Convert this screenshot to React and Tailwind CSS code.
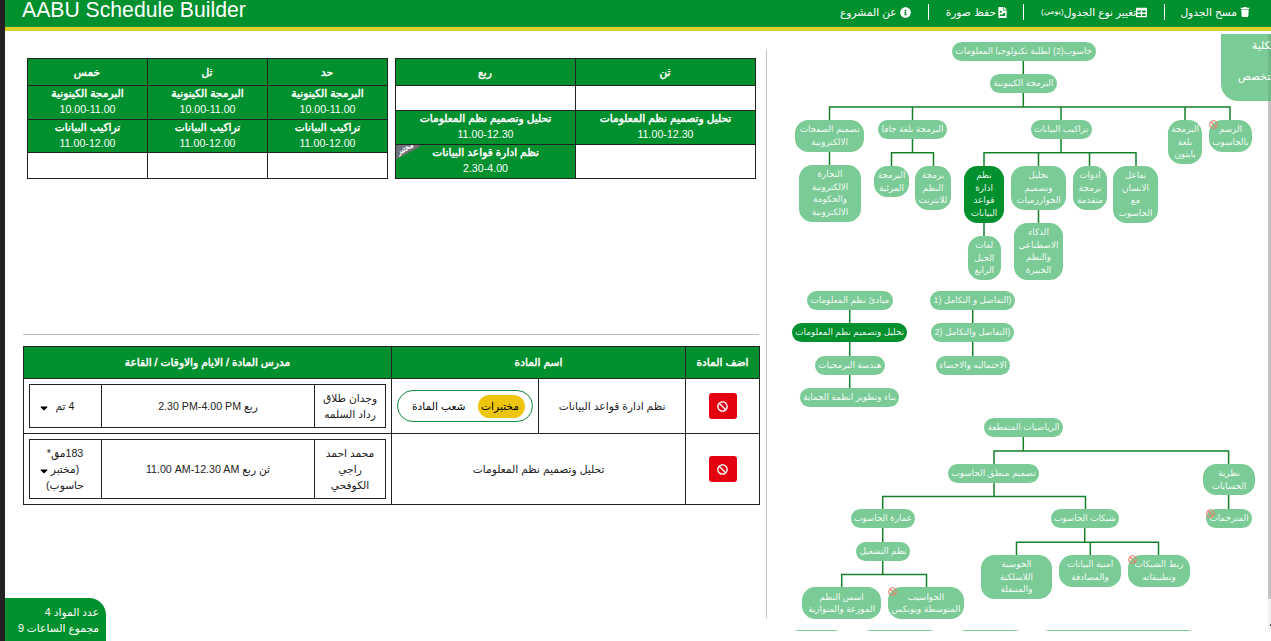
import { FaTrash, FaTable, FaFileImage, FaInfoCircle, FaBan, FaCaretDown } from "react-icons/fa";

const LINKS = [
  "M1023.3 60V75M1023.3 93V107M829.5 121V107H1230V121M912.5 107V121M1061 107V121M1185 107V121",
  "M829.5 152V166M912.5 139V152.7M891.5 167V152.7H933.5V167",
  "M1061 139V152.7M984 167V152.7H1136V167M1038.5 152.7V167M1089.5 152.7V167M984 222V237M1038.5 209V224",
  "M849.7 309V324M849.7 341V357M849.7 374V389M972.7 309V324M972.7 341V357",
  "M1023.3 436V451M994 465V451H1228.6V465M1228.6 494V510M994 482V496.5M882.7 510V496.5H1085.5V510",
  "M1084.7 528V542.3M1016.5 556V542.3H1158.5V556M1090.3 542.3V556",
  "M882.7 528V543M882.7 560V574.6M841.7 588V574.6H926.5V588",
];

const NODES = [
  { x: 951.7, y: 42, w: 144, lines: ["حاسوب(2) لطلبة تكنولوجيا المعلومات"] },
  { x: 990, y: 74.3, w: 67, lines: ["البرمجة الكينونية"] },
  { x: 795.3, y: 120, w: 68.7, lines: ["تصميم الصفحات", "الالكترونية"] },
  { x: 878, y: 120, w: 69, lines: ["البرمجة بلغة جافا"] },
  { x: 1030.5, y: 120, w: 61, lines: ["تراكيب البيانات"] },
  { x: 1168, y: 120, w: 34, lines: ["البرمجة", "بلغة", "بايثون"] },
  { x: 1209, y: 120, w: 43, lines: ["الرسم", "بالحاسوب"], blocked: true },
  { x: 799, y: 165, w: 62, lines: ["التجارة", "الالكترونية", "والحكومة", "الالكترونية"] },
  { x: 874, y: 165.8, w: 35, lines: ["البرمجة", "المرئية"] },
  { x: 915, y: 165.8, w: 36, lines: ["برمجة", "النظم", "للانترنت"] },
  { x: 964, y: 165.8, w: 40, lines: ["نظم", "ادارة", "قواعد", "البيانات"], active: true },
  { x: 1011, y: 165.8, w: 55, lines: ["تحليل", "وتصميم", "الخوارزميات"] },
  { x: 1073, y: 165.8, w: 34, lines: ["ادوات", "برمجة", "متقدمة"] },
  { x: 1113, y: 165.8, w: 45, lines: ["تفاعل", "الانسان", "مع", "الحاسوب"] },
  { x: 967.5, y: 236, w: 33.5, lines: ["لغات", "الجيل", "الرابع"] },
  { x: 1014, y: 223, w: 49, lines: ["الذكاء", "الاصطناعي", "والنظم", "الخبيرة"] },
  { x: 806.7, y: 291, w: 86.3, lines: ["مبادئ نظم المعلومات"] },
  { x: 930, y: 291, w: 85, lines: ["(التفاضل و التكامل (1"] },
  { x: 792, y: 323.3, w: 115.3, lines: ["تحليل وتصميم نظم المعلومات"], active: true },
  { x: 931, y: 323.3, w: 83, lines: ["(التفاضل والتكامل (2"] },
  { x: 814.5, y: 356, w: 70.5, lines: ["هندسة البرمجيات"] },
  { x: 936, y: 356, w: 74, lines: ["الاحتماليه والاحصاء"] },
  { x: 800, y: 388, w: 99, lines: ["بناء وتطوير انظمة الحماية"] },
  { x: 984, y: 418, w: 79, lines: ["الرياضيات المتقطعة"] },
  { x: 948, y: 464, w: 91, lines: ["تصميم منطق الحاسوب"] },
  { x: 1203, y: 463.8, w: 52, lines: ["نظرية", "الحسابات"] },
  { x: 1206, y: 509, w: 46, lines: ["المترجمات"], blocked: true },
  { x: 851, y: 509.3, w: 64, lines: ["عمارة الحاسوب"] },
  { x: 1051, y: 509.3, w: 68, lines: ["شبكات الحاسوب"] },
  { x: 856, y: 542, w: 54, lines: ["نظم التشغيل"] },
  { x: 981, y: 555, w: 71, lines: ["الحوسبة", "اللاسلكية", "والمتنقلة"] },
  { x: 1059, y: 555, w: 62, lines: ["امنية البيانات", "والمصادقة"] },
  { x: 1128, y: 555, w: 62, lines: ["ربط الشبكات", "وتطبيقاته"], blocked: true },
  { x: 802, y: 587.3, w: 79.3, lines: ["اسس النظم", "الموزعة والمتوازية"] },
  { x: 888, y: 587.3, w: 76, lines: ["الحواسيب", "المتوسطة ويونكس"], blocked: true },
  { x: 789, y: 629.6, w: 55, lines: [""] },
  { x: 861, y: 629.6, w: 78, lines: [""] },
  { x: 956, y: 629.6, w: 68, lines: [""] },
  { x: 1040, y: 629.6, w: 157, lines: [""] },
];

const OX = 767;
const OY = 34;

function Node({ node }) {
  const n = node.lines.length;
  return (
    <div
      className={`absolute flex flex-col justify-center text-center whitespace-nowrap text-[8.8px] leading-[12.6px] text-white/95 ${
        n > 1 ? "rounded-[13.3px]" : "rounded-[9.5px]"
      } ${node.active ? "bg-[#00902d]" : "bg-[#7acb95]"}`}
      style={{ left: node.x - OX, top: node.y - OY, width: node.w, height: 6.3 + 12.65 * n }}
    >
      {node.lines.map((l, i) => (
        <div key={i} dir="rtl" className="flex justify-center">
          <span>{l}</span>
        </div>
      ))}
      {node.blocked && <FaBan className="absolute top-0 left-0 size-[9px] text-[#e8826f]" />}
    </div>
  );
}

function Tree() {
  return (
    <section className="relative h-[597px] w-[504px] shrink-0 overflow-hidden">
      <svg className="absolute inset-0" width="504" height="597" viewBox="767 34 504 597" fill="none">
        {LINKS.map((d) => (
          <path key={d} d={d} stroke="#14812a" strokeWidth="1.5" />
        ))}
      </svg>
      {NODES.map((node, i) => (
        <Node key={i} node={node} />
      ))}
      <div className="absolute top-0 right-0 h-full w-[3px] bg-[#f1f1f1]">
        <div className="h-[565px] bg-[#c1c1c1]" />
        <div className="mt-[25px] ml-[2px] h-[2px] w-[1px] bg-[#505050]" />
      </div>
      <div className="absolute top-0 right-0 h-[67px] w-[50px] overflow-hidden rounded-bl-[17px] bg-[#7acb95] text-[10.67px] leading-[16px] whitespace-nowrap text-white">
        <div className="absolute top-0 right-0 h-full w-[3px] bg-[#6dba86]" />
        <div dir="ltr" className="relative mt-[3px] ml-[31px]">الكلية</div>
        <div dir="ltr" className="relative mt-[15px] ml-[17px]">التخصص</div>
      </div>
    </section>
  );
}

const cell = "border border-[#222] p-0 text-center";
const heavy = "font-normal [-webkit-text-stroke:0.45px_white]";

function Slot({ name, time, lab }) {
  if (!name) return <td className={cell} />;
  return (
    <td className={`${cell} relative overflow-hidden bg-[#00902d] align-top text-white`}>
      <div className="-mt-px ml-px">
        <div className={heavy}>{name}</div>
        <div>{time}</div>
      </div>
      {lab && (
        <div className="absolute top-0 left-0 h-[14px] w-[24px] overflow-hidden">
          <div className="absolute top-[-3px] left-[-11px] w-[40px] -rotate-[28deg] bg-[#6d7078] pt-[2px] text-center text-[7.5px] leading-[10px] [-webkit-text-stroke:0.3px_white]">مختبر</div>
        </div>
      )}
    </td>
  );
}

function Schedule({ days, rows, heights }) {
  return (
    <table dir="rtl" className="w-[361px] table-fixed border-collapse leading-[16px]">
      <thead>
        <tr className="h-[27px] bg-[#00902d] text-white">
          {days.map((d) => (
            <th key={d} className={`${cell} ${heavy}`}><div className="-mt-px">{d}</div></th>
          ))}
        </tr>
      </thead>
      <tbody>
        {rows.map((r, i) => (
          <tr key={i} style={{ height: heights[i] }}>
            {r.map((s, j) => (
              <Slot key={j} {...s} />
            ))}
          </tr>
        ))}
      </tbody>
    </table>
  );
}

const kin = { name: "البرمجة الكينونية", time: "10.00-11.00" };
const ds = { name: "تراكيب البيانات", time: "11.00-12.00" };
const sa = { name: "تحليل وتصميم نظم المعلومات", time: "11.00-12.30" };
const db = { name: "نظم ادارة قواعد البيانات", time: "2.30-4.00", lab: true };

function RemoveButton() {
  return (
    <button className="inline-flex h-[26px] w-[28px] items-center justify-center rounded-[3px] bg-[#e3000f] align-middle text-white">
      <FaBan className="size-[11px]" />
    </button>
  );
}

function Section({ teacher, days, time, room, height }) {
  return (
    <table dir="rtl" className="mx-auto w-[357px] table-fixed border-collapse leading-[16px]">
      <colgroup>
        <col className="w-[71px]" />
        <col className="w-[213px]" />
        <col className="w-[72px]" />
      </colgroup>
      <tbody>
        <tr style={{ height }}>
          <td className={cell}>{teacher.map((t) => <div key={t}>{t}</div>)}</td>
          <td className={cell}>{days} <bdi dir="ltr">{time}</bdi></td>
          <td className={cell}>
            <div className="flex items-center justify-between pr-[17px] pl-[8px]">
              <div className="-ml-[6px] w-[38px] shrink-0 whitespace-nowrap">{room.map((t) => <div key={t}>{t}</div>)}</div>
              <FaCaretDown className="mt-[4px] size-[12px] shrink-0 text-black" />
            </div>
          </td>
        </tr>
      </tbody>
    </table>
  );
}

function Courses() {
  return (
    <table dir="rtl" className="w-[737px] table-fixed border-collapse leading-[16px] text-[#222]">
      <colgroup>
        <col className="w-[74px]" />
        <col className="w-[147px]" />
        <col className="w-[147px]" />
        <col className="w-[368px]" />
      </colgroup>
      <thead>
        <tr className="h-[32px] bg-[#00902d] text-white">
          <th className={`${cell} ${heavy}`}><div className="-mt-[2px]">اضف المادة</div></th>
          <th className={`${cell} ${heavy}`} colSpan={2}><div className="-mt-[2px]">اسم المادة</div></th>
          <th className={`${cell} ${heavy}`}><div className="-mt-[2px]">مدرس المادة / الايام والاوقات / القاعة</div></th>
        </tr>
      </thead>
      <tbody>
        <tr className="h-[55px]">
          <td className={cell}><RemoveButton /></td>
          <td className={cell}>نظم ادارة قواعد البيانات</td>
          <td className={cell}>
            <div className="mx-auto flex h-[32px] w-[136px] items-center justify-between rounded-full border-[1.5px] border-[#168a40] pr-[7px] pl-[14px] text-black">
              <span className="h-[23px] w-[47px] rounded-full bg-[#edc50c] pr-[3px] leading-[22px]">مختبرات</span>
              <span>شعب المادة</span>
            </div>
          </td>
          <td className={cell}>
            <Section teacher={["وجدان طلاق", "رداد السلمه"]} days="ربع" time="2.30 PM-4.00 PM" room={["4 تم"]} height={43} />
          </td>
        </tr>
        <tr className="h-[71px]">
          <td className={cell}><RemoveButton /></td>
          <td className={cell} colSpan={2}>تحليل وتصميم نظم المعلومات</td>
          <td className={cell}>
            <Section teacher={["محمد احمد", "راجي", "الكوفحي"]} days="ثن ربع" time="11.00 AM-12.30 AM" room={["183مق*", "(مختبر", "حاسوب)"]} height={59} />
          </td>
        </tr>
      </tbody>
    </table>
  );
}

function Header() {
  return (
    <header className="flex h-[31px] shrink-0 justify-between border-b-4 border-[#dccf2b] bg-[#00902d] text-white">
      <h1 className="ml-[17px] text-[21.2px] leading-[20px]">AABU Schedule Builder</h1>
      <nav dir="rtl" className="flex pt-[4px] text-[10.67px] leading-[16px] whitespace-nowrap">
        <a className="mr-[21px] flex h-[16px] items-center gap-[3px]"><FaTrash className="size-[10px]" />مسح الجدول</a>
        <i className="mr-[15px] h-[16px] w-px bg-white" />
        <a className="mr-[17px] flex h-[16px] items-center"><FaTable className="size-[11px]" />تغيير نوع الجدول<span className="text-[8px]">(يومي)</span></a>
        <i className="mr-[17px] h-[16px] w-px bg-white" />
        <a className="mr-[16px] flex h-[16px] items-center gap-[2px]"><FaFileImage className="h-[11px] w-[9px]" />حفظ صورة</a>
        <i className="mr-[17px] h-[16px] w-px bg-white" />
        <a className="mr-[17px] flex h-[16px] items-center gap-[3px]"><FaInfoCircle className="size-[11px]" />عن المشروع</a>
      </nav>
    </header>
  );
}

export default function App() {
  return (
    <div className="flex h-[641px] w-[1271px] overflow-hidden bg-white text-[10.67px] [font-family:'Liberation_Sans','DejaVu_Sans',sans-serif]">
      <div className="w-[5px] shrink-0 bg-[#222]" />
      <div className="flex w-[1266px] flex-col">
        <Header />
        <main className="flex h-[610px]">
          <div className="flex w-[761px] shrink-0 flex-col">
            <div className="flex h-[303px] gap-[7px] pt-[27px] pl-[21.5px]">
              <div>
                <Schedule days={["حد", "ثل", "خمس"]} heights={[34, 33, 26]} rows={[[kin, kin, kin], [ds, ds, ds], [{}, {}, {}]]} />
              </div>
              <div>
                <Schedule days={["ثن", "ربع"]} heights={[25, 34, 34]} rows={[[{}, {}], [sa, sa], [{}, db]]} />
              </div>
            </div>
            <hr className="ml-[18px] w-[736px] border-[#bbb]" />
            <div className="mt-[11px] ml-[18px] h-[160px]">
              <Courses />
            </div>
            <div className="mt-auto h-[43px] w-[101px] rounded-tr-[17px] bg-[#00902d] pt-[6px] pr-[7px] text-right leading-[16px] text-white" dir="rtl">
              <div>عدد المواد 4</div>
              <div>مجموع الساعات 9</div>
            </div>
          </div>
          <div className="mt-[19px] h-[568px] w-px shrink-0 bg-[#c4c4c4]" />
          <div className="pt-[3px]">
            <Tree />
          </div>
        </main>
      </div>
    </div>
  );
}
